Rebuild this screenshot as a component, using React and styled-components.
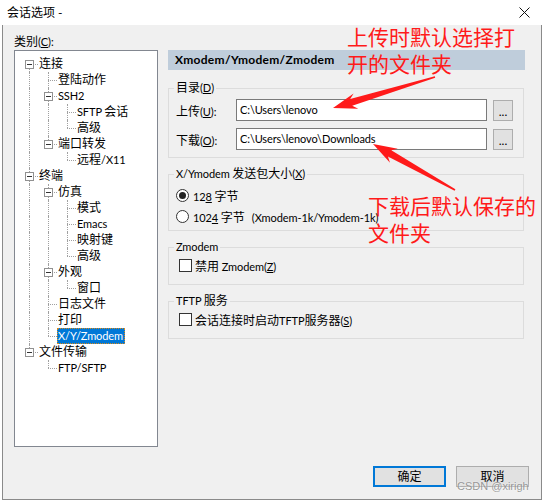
import React from 'react';
import styled, { createGlobalStyle, css } from 'styled-components';

const GlobalStyle = createGlobalStyle`
  body {
    margin: 0;
    background: #fff;
    font-family: "Lato", "Noto Sans CJK SC", sans-serif;
    font-size: 12px;
    color: #000;
  }
`;

const Page = styled.div`
  position: relative;
  width: 543px;
  height: 502px;
  overflow: hidden;
  background: #fff;
`;

const TitleBar = styled.div`
  height: 25px;
  display: flex;
  align-items: center;
  justify-content: space-between;
  padding: 0 13px 0 7px;
  box-sizing: border-box;
`;

const Title = styled.span`
  font-size: 12px;
  line-height: 16px;
`;

const Window = styled.div`
  margin-left: 2px;
  width: 540px;
  height: 475px;
  box-sizing: border-box;
  border: 1px solid #8a8a8a;
  border-top: none;
  background: #f0f0f0;
  display: flex;
  flex-direction: column;
  padding: 0 12px 12px 11px;
`;

const Main = styled.div`
  display: grid;
  grid-template-columns: 144px 357px;
  column-gap: 10px;
`;

const LeftCol = styled.div`
  display: flex;
  flex-direction: column;
`;

const CategoryLabel = styled.div`
  height: 25px;
  box-sizing: border-box;
  padding-top: 9px;
  line-height: 16px;
`;

const Tree = styled.div`
  height: 397px;
  box-sizing: border-box;
  border: 1px solid #828790;
  background: #fff;
  padding: 5px 0 0 4px;
`;

const TreeRow = styled.div`
  display: flex;
  align-items: center;
  height: 16px;
`;

const Cell = styled.span`
  position: relative;
  flex: none;
  width: 19px;
  height: 16px;

  &::before {
    content: '';
    position: absolute;
    left: 10px;
    top: ${(p) => (p.$up ? 0 : 8)}px;
    bottom: ${(p) => (p.$down ? 0 : 8)}px;
    border-left: 1px dotted #a0a0a0;
    display: ${(p) => (p.$up || p.$down ? 'block' : 'none')};
  }

  &::after {
    content: '';
    position: absolute;
    left: 10px;
    right: 0;
    top: 8px;
    border-top: 1px dotted #a0a0a0;
    display: ${(p) => (p.$branch ? 'block' : 'none')};
  }
`;

const Expander = styled.span`
  position: absolute;
  left: 6px;
  top: 4px;
  width: 9px;
  height: 9px;
  box-sizing: border-box;
  border: 1px solid #919191;
  background: #fff;
  z-index: 1;

  &::after {
    content: '';
    position: absolute;
    left: 1px;
    top: 3px;
    width: 5px;
    height: 1px;
    background: #333;
  }
`;

const NodeLabel = styled.span`
  padding: 0 1px 0 0;
  line-height: 14px;
  border: 1px dotted transparent;
  white-space: nowrap;

  ${(p) =>
    p.$selected &&
    css`
      background: #0078d7;
      color: #fff;
      border-color: #d98a1a;
    `}
`;

const RightCol = styled.div`
  padding-top: 25px;
`;

const Header = styled.div`
  height: 20px;
  line-height: 20px;
  background: #bfcddb;
  font-weight: bold;
  padding-left: 7px;
  letter-spacing: 0.3px;
`;

const Group = styled.fieldset`
  margin: ${(p) => p.$mt}px 1px 0 0;
  padding: ${(p) => p.$pad};
  border: 1px solid #dcdcdc;
  min-width: 0;
  display: flex;
  flex-direction: column;
  gap: ${(p) => p.$gap || 0}px;
`;

const Legend = styled.legend`
  padding: 0 2px;
  margin-left: -2px;
  line-height: 14px;
  font-size: 12px;
`;

const FieldRow = styled.div`
  display: flex;
  align-items: center;
`;

const FieldLabel = styled.span`
  width: 60px;
  flex: none;
`;

const PathInput = styled.div`
  width: 251px;
  height: 22px;
  box-sizing: border-box;
  border: 1px solid #7a7a7a;
  background: #fff;
  padding: 0 3px;
  line-height: 20px;
  white-space: nowrap;
  overflow: hidden;
`;

const BrowseButton = styled.button`
  margin-left: 6px;
  width: 20px;
  height: 21px;
  box-sizing: border-box;
  border: 1px solid #adadad;
  background: #e1e1e1;
  padding: 0;
  font: inherit;
  line-height: 21px;
  color: #000;
`;

const OptionRow = styled.label`
  display: flex;
  align-items: center;
  height: ${(p) => p.$h}px;
  padding-left: ${(p) => p.$indent || 0}px;
  gap: ${(p) => p.$gap}px;
  white-space: nowrap;
`;

const Radio = styled.span`
  position: relative;
  width: 13px;
  height: 13px;
  box-sizing: border-box;
  border: 1px solid #333;
  border-radius: 50%;
  background: #fff;
  flex: none;

  ${(p) =>
    p.$checked &&
    css`
      &::after {
        content: '';
        position: absolute;
        left: 2px;
        top: 2px;
        width: 7px;
        height: 7px;
        border-radius: 50%;
        background: #222;
      }
    `}
`;

const Checkbox = styled.span`
  width: 13px;
  height: 13px;
  box-sizing: border-box;
  border: 1px solid #333;
  background: #fff;
  flex: none;
`;

const Hint = styled.span`
  margin-left: 7px;
`;

const Footer = styled.div`
  margin-top: auto;
  display: flex;
  justify-content: flex-end;
  gap: 10px;
`;

const DialogButton = styled.button`
  width: 73px;
  height: 21px;
  box-sizing: border-box;
  background: #e1e1e1;
  border: ${(p) => (p.$default ? '2px solid #0078d7' : '1px solid #adadad')};
  font: inherit;
  line-height: 17px;
  color: #000;
  padding: 0;
`;

// Latin runs render narrower than the CJK ones, as in the YaHei UI font
const Latin = styled.span`
  font-size: 11px;
  letter-spacing: -0.1px;
`;

const Note = styled.div`
  position: absolute;
  left: ${(p) => p.$x}px;
  top: ${(p) => p.$y}px;
  color: #ff1a1a;
  font-family: "Noto Sans CJK SC", sans-serif;
  font-size: 21px;
  line-height: 27px;
  white-space: nowrap;
`;

const ArrowLayer = styled.svg`
  position: absolute;
  left: 0;
  top: 0;
  pointer-events: none;
`;

const Watermark = styled.div`
  position: absolute;
  left: 457px;
  top: 479px;
  font-family: "Liberation Sans", sans-serif;
  font-size: 11px;
  line-height: 14px;
  color: rgba(120, 120, 120, 0.75);
  text-shadow: 0 0 2px #fff;
  white-space: nowrap;
`;

// "&X" underlines X (Windows mnemonic); Latin and CJK runs get split
function Txt({ s }) {
  const runs = [];
  for (let i = 0; i < s.length; i++) {
    let ch = s[i];
    let u = false;
    if (ch === '&' && i + 1 < s.length) {
      ch = s[++i];
      u = true;
    }
    const latin = ch.charCodeAt(0) < 0x2000;
    const last = runs[runs.length - 1];
    if (last && last.latin === latin) last.chars.push({ ch, u });
    else runs.push({ latin, chars: [{ ch, u }] });
  }
  return runs.map((run, ri) => {
    const content = [];
    let plain = '';
    run.chars.forEach((c, ci) => {
      if (c.u) {
        if (plain) content.push(plain);
        plain = '';
        content.push(<u key={ci}>{c.ch}</u>);
      } else {
        plain += c.ch;
      }
    });
    if (plain) content.push(plain);
    return run.latin ? (
      <Latin key={ri}>{content}</Latin>
    ) : (
      <React.Fragment key={ri}>{content}</React.Fragment>
    );
  });
}

const treeItems = [
  { label: '连接', level: 0, open: true },
  { label: '登陆动作', level: 1 },
  { label: 'SSH2', level: 1, open: true },
  { label: 'SFTP 会话', level: 2 },
  { label: '高级', level: 2 },
  { label: '端口转发', level: 1, open: true },
  { label: '远程/X11', level: 2 },
  { label: '终端', level: 0, open: true },
  { label: '仿真', level: 1, open: true },
  { label: '模式', level: 2 },
  { label: 'Emacs', level: 2 },
  { label: '映射键', level: 2 },
  { label: '高级', level: 2 },
  { label: '外观', level: 1, open: true },
  { label: '窗口', level: 2 },
  { label: '日志文件', level: 1 },
  { label: '打印', level: 1 },
  { label: 'X/Y/Zmodem', level: 1, selected: true },
  { label: '文件传输', level: 0, open: true },
  { label: 'FTP/SFTP', level: 1 },
];

// true when the node at `level` owning row i still has a sibling further down
function hasNextSibling(items, i, level) {
  for (let j = i + 1; j < items.length; j++) {
    if (items[j].level <= level) return items[j].level === level;
  }
  return false;
}

function TreeView() {
  return (
    <Tree>
      {treeItems.map((item, i) => {
        const cells = [];
        for (let c = 0; c <= item.level; c++) {
          const next = hasNextSibling(treeItems, i, c);
          if (c < item.level) {
            cells.push(<Cell key={c} $up={next} $down={next} />);
          } else {
            cells.push(
              <Cell key={c} $up={i > 0} $down={next} $branch>
                {item.open && <Expander />}
              </Cell>
            );
          }
        }
        return (
          <TreeRow key={i}>
            {cells}
            <NodeLabel $selected={item.selected}>
              <Txt s={item.label} />
            </NodeLabel>
          </TreeRow>
        );
      })}
    </Tree>
  );
}

export default function App() {
  return (
    <Page>
      <GlobalStyle />
      <TitleBar>
        <Title>会话选项 -</Title>
        <svg width="11" height="11" viewBox="0 0 11 11">
          <path d="M0.5 0.5 L10.5 10.5 M10.5 0.5 L0.5 10.5" stroke="#111" strokeWidth="1" />
        </svg>
      </TitleBar>
      <Window>
        <Main>
          <LeftCol>
            <CategoryLabel>
              <Txt s="类别(&C):" />
            </CategoryLabel>
            <TreeView />
          </LeftCol>
          <RightCol>
            <Header>Xmodem/Ymodem/Zmodem</Header>

            <Group $mt={11} $pad="4px 10px 7px 7px" $gap={7}>
              <Legend>
                <Txt s="目录(&D)" />
              </Legend>
              <FieldRow>
                <FieldLabel>
                  <Txt s="上传(&U):" />
                </FieldLabel>
                <PathInput>
                  <Txt s={'C:\\Users\\lenovo'} />
                </PathInput>
                <BrowseButton>...</BrowseButton>
              </FieldRow>
              <FieldRow>
                <FieldLabel>
                  <Txt s="下载(&O):" />
                </FieldLabel>
                <PathInput>
                  <Txt s={'C:\\Users\\lenovo\\Downloads'} />
                </PathInput>
                <BrowseButton>...</BrowseButton>
              </FieldRow>
            </Group>

            <Group $mt={9} $pad="4px 10px 3px 7px">
              <Legend>
                <Txt s="X/Ymodem 发送包大小(&X)" />
              </Legend>
              <OptionRow $h={21} $gap={4}>
                <Radio $checked />
                <span>
                  <Txt s="12&8 字节" />
                </span>
              </OptionRow>
              <OptionRow $h={21} $gap={4}>
                <Radio />
                <span>
                  <Txt s="102&4 字节" />
                  <Hint>
                    <Txt s="(Xmodem-1k/Ymodem-1k)" />
                  </Hint>
                </span>
              </OptionRow>
            </Group>

            <Group $mt={9} $pad="2px 10px 10px 7px">
              <Legend>
                <Txt s="Zmodem" />
              </Legend>
              <OptionRow $h={18} $gap={3} $indent={3}>
                <Checkbox />
                <span>
                  <Txt s="禁用 Zmodem(&Z)" />
                </span>
              </OptionRow>
            </Group>

            <Group $mt={9} $pad="2px 10px 10px 7px">
              <Legend>
                <Txt s="TFTP 服务" />
              </Legend>
              <OptionRow $h={18} $gap={3} $indent={3}>
                <Checkbox />
                <span>
                  <Txt s="会话连接时启动TFTP服务器(&S)" />
                </span>
              </OptionRow>
            </Group>
          </RightCol>
        </Main>
        <Footer>
          <DialogButton $default>确定</DialogButton>
          <DialogButton>取消</DialogButton>
        </Footer>
      </Window>

      <Note $x={347} $y={23}>
        上传时默认选择打
        <br />
        开的文件夹
      </Note>
      <Note $x={368} $y={192}>
        下载后默认保存的
        <br />
        文件夹
      </Note>
      <ArrowLayer width="543" height="502" viewBox="0 0 543 502">
        <polygon
          fill="#ff1a1a"
          points="333,108 358.3,108.7 352.2,105.8 435.2,77.8 434.8,76.2 350.2,99.1 353.6,93.4"
        />
        <polygon
          fill="#ff1a1a"
          points="373,144 397.8,148.7 391.3,150.2 455.4,189.3 454.6,190.7 387.9,156.4 390,162.7"
        />
      </ArrowLayer>
      <Watermark>CSDN @xirigh</Watermark>
    </Page>
  );
}
